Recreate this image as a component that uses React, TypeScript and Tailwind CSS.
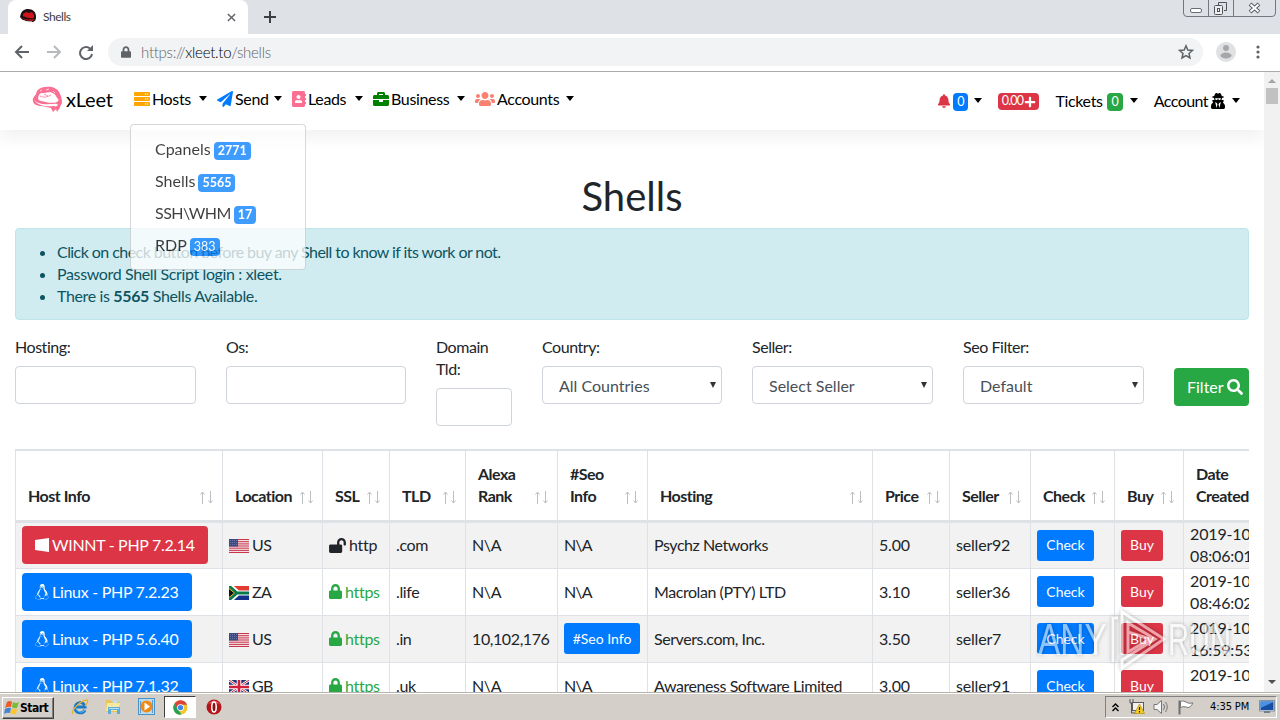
import clsx from 'clsx';
import type { ReactNode } from 'react';
import {
  FaAddressBook,
  FaBell,
  FaBriefcase,
  FaLinux,
  FaLock,
  FaLockOpen,
  FaPaperPlane,
  FaPlus,
  FaSearch,
  FaServer,
  FaUserSecret,
  FaUsers,
} from 'react-icons/fa';

const leftMenu = [
  { label: 'Hosts', icon: <FaServer className="w-4" />, color: 'text-[#ffa500]', width: 'w-[83px]' },
  { label: 'Send', icon: <FaPaperPlane className="w-4" />, color: 'text-[#007bff]', width: 'w-[75px]' },
  { label: 'Leads', icon: <FaAddressBook className="w-3.5" />, color: 'text-[#fb6f92]', width: 'w-[81px]' },
  { label: 'Business', icon: <FaBriefcase className="w-4" />, color: 'text-[#008000]', width: 'w-[102px]' },
  { label: 'Accounts', icon: <FaUsers className="h-4 w-5" />, color: 'text-[#fa8072]', width: 'w-[109px]' },
];

const hostItems = [
  { label: 'Cpanels', count: '2771', spacing: '', weight: 'font-bold' },
  { label: 'Shells', count: '5565', spacing: '', weight: 'font-bold' },
  { label: 'SSH\\WHM', count: '17', spacing: 'tracking-[-0.55px]', weight: 'font-bold' },
  { label: 'RDP', count: '383', spacing: '', weight: 'font-normal' },
];

const columns = [
  { label: 'Host Info', width: 'w-[207px]' },
  { label: 'Location', width: 'w-[100px]' },
  { label: 'SSL', width: 'w-[67px]' },
  { label: 'TLD', width: 'w-[76px]' },
  { label: 'Alexa\nRank', width: 'w-[92px]' },
  { label: '#Seo\nInfo', width: 'w-[90px]' },
  { label: 'Hosting', width: 'w-[225px]' },
  { label: 'Price', width: 'w-[77px]' },
  { label: 'Seller', width: 'w-[81px]' },
  { label: 'Check', width: 'w-[84px]' },
  { label: 'Buy', width: 'w-[69px]' },
  { label: 'Date\nCreated', width: 'w-[110px]' },
];

const rows = [
  { host: 'WINNT - PHP 7.2.14', country: 'US', https: false, tld: '.com', rank: 'N\\A', seo: false, hosting: 'Psychz Networks', price: '5.00', seller: 'seller92', time: '08:06:01' },
  { host: 'Linux - PHP 7.2.23', country: 'ZA', https: true, tld: '.life', rank: 'N\\A', seo: false, hosting: 'Macrolan (PTY) LTD', price: '3.10', seller: 'seller36', time: '08:46:02' },
  { host: 'Linux - PHP 5.6.40', country: 'US', https: true, tld: '.in', rank: '10,102,176', seo: true, hosting: 'Servers.com, Inc.', price: '3.50', seller: 'seller7', time: '16:59:53' },
  { host: 'Linux - PHP 7.1.32', country: 'GB', https: true, tld: '.uk', rank: 'N\\A', seo: false, hosting: 'Awareness Software Limited', price: '3.00', seller: 'seller91', time: '' },
];

function Caret({ className }: { className?: string }) {
  return <span className={clsx('block h-0 w-0 border-x-[4.5px] border-t-[5px] border-x-transparent border-t-black', className)} />;
}

function Badge({ className, children }: { className: string; children: ReactNode }) {
  return (
    <span className={clsx('flex h-[18px] items-center rounded px-1 pt-px text-[12.5px] tracking-normal text-white', className)}>{children}</span>
  );
}

function Logo() {
  return (
    <svg viewBox="0 0 31 27" className="mb-1 h-[27px] w-[31px]">
      <path
        fill="#fb6f92"
        d="M1 15C0 12 3 10 4 8C5 3 9 1 14 1C19 0 25 2 27 6C29 9 30 13 30 17C29 19 28 20 28 22C27 23 26 24 25 26L24 23L21 26L19 22C16 21 13 21 10 20C5 20 1 18 1 15Z"
      />
      <path fill="white" d="M7 9C8 7 10 7 12 7L18 6C22 7 24 9 25 12C27 13 27 15 25 16C20 18 14 16 9 15C5 14 6 11 7 9Z" />
      <path fill="white" d="M2 14C6 18 12 19 18 18C22 18 25 17 26 19C25 20 24 21 22 20C15 21 6 20 2 14Z" />
      <path fill="none" stroke="#fb6f92" strokeWidth=".8" d="M8 10C12 12 15 11 19 9M12 8L16 10" />
      <path fill="none" stroke="white" strokeWidth=".7" d="M8 5L10 4M14 4L17 3M21 5L23 7" />
    </svg>
  );
}

function Favicon() {
  return (
    <svg viewBox="0 0 16 16" className="h-4 w-4">
      <path fill="#1d1013" d="M0 8C1 2 4 0 8 0C13 0 16 3 16 8C16 11 15 12 13 13C8 13 2 12 0 8Z" />
      <path fill="#d0141c" d="M3 5L6 3L9 4L12 3L14 6L14 9C9 10 6 8 3 7Z" />
      <path fill="#d0141c" d="M1 8C5 11 10 11 14 10L13 12C8 12 4 11 1 8Z" />
      <path fill="#f7eeee" d="M3 11C6 12 9 13 12 12L10 15L9 13C6 14 4 13 3 11Z" />
    </svg>
  );
}

function Flag({ country }: { country: string }) {
  if (country === 'US') {
    return (
      <svg viewBox="0 0 20 14" className="mt-0.5 h-3.5 w-5">
        <path fill="#f3dfe3" d="M0 0h20v14H0z" />
        <path stroke="#c8364c" d="M0 .5h20M0 2.700h20M0 4.900h20M0 7h20M0 9.200h20M0 11.400h20M0 13.500h20" />
        <path fill="#3c4a83" d="M0 0h9v7.500H0z" />
        <path stroke="#8790b5" strokeWidth=".6" strokeDasharray="1 1" d="M1 1.500h7M1 3.500h7M1 5.500h7" />
      </svg>
    );
  }
  if (country === 'ZA') {
    return (
      <svg viewBox="0 0 20 14" className="mt-0.5 h-3.5 w-5">
        <path fill="#e03c31" d="M0 0h20v7H0z" />
        <path fill="#16338c" d="M0 7h20v7H0z" />
        <path stroke="white" strokeWidth="5" fill="none" d="M0-1L9 7L0 15M8 7h12" />
        <path fill="#111" d="M0 2L6 7L0 12z" />
        <path stroke="#ffb81c" fill="none" d="M0 2.500L5.500 7L0 11.500" />
        <path stroke="#087a4a" strokeWidth="2.800" fill="none" d="M0 0L8 7L0 14M8 7h12" />
      </svg>
    );
  }
  return (
    <svg viewBox="0 0 20 14" className="mt-0.5 h-3.5 w-5">
      <path fill="#1d3475" d="M0 0h20v14H0z" />
      <path stroke="white" strokeWidth="2.600" d="M0 0L20 14M20 0L0 14" />
      <path stroke="#d0203a" d="M0 0L20 14M20 0L0 14" />
      <path stroke="white" strokeWidth="4.600" d="M10 0v14M0 7h20" />
      <path stroke="#d0203a" strokeWidth="2.600" d="M10 0v14M0 7h20" />
    </svg>
  );
}

function BrowserChrome() {
  return (
    <header className="h-[72px] shrink-0 border-b border-[#a9abad] bg-white">
      <div className="flex h-[34px] items-start bg-[#dee1e6] pl-2">
        <div className="flex h-[34px] w-60 items-center rounded-t-lg bg-white pl-3 pr-3">
          <Favicon />
          <span className="ml-[7px] flex-1 text-xs tracking-[-0.45px] text-[#3c4043]">Shells</span>
          <svg viewBox="0 0 10 10" className="h-[9px] w-[9px]">
            <path d="M1 1L9 9M9 1L1 9" stroke="#5f6368" strokeWidth="1.600" />
          </svg>
        </div>
        <svg viewBox="0 0 12 12" className="ml-4 mt-[11px] h-3 w-3">
          <path d="M6 0V12M0 6H12" stroke="#3c4043" strokeWidth="2" />
        </svg>
        <svg viewBox="0 0 94 18" className="ml-auto mr-[3px] h-[18px] w-[94px]" fill="none">
          <path d="M.5 0V13Q.5 16.500 4 16.500H89Q92.500 16.500 92.500 13V0M25.500 0V16M50.500 0V16" stroke="#73777f" />
          <rect x="7.500" y="8.500" width="11" height="4" rx="1.500" fill="#fff" stroke="#6b6f78" />
          <path d="M35.500 6V2.500H43.500V10.500H41" stroke="#4f535b" />
          <rect x="31.500" y="5.500" width="8" height="9" rx="1" fill="#eee" stroke="#4f535b" />
          <rect x="34.500" y="8.500" width="2" height="3" stroke="#4f535b" />
          <path d="M67 4L76 12M76 4L67 12" stroke="#5a5e67" strokeWidth="4" />
          <path d="M67.500 4.500L75.500 11.500M75.500 4.500L67.500 11.500" stroke="#fff" strokeWidth="2" />
        </svg>
      </div>
      <div className="flex h-9 items-center pl-3.5">
        <svg viewBox="0 0 80 16" className="h-4 w-20" fill="none" strokeWidth="2">
          <path d="M15 8H2M8 2L2 8L8 14" stroke="#5f6368" />
          <path d="M33 8H46M40 2L46 8L40 14" stroke="#b7babd" />
          <path d="M76 4.500A6 6 0 1 0 78 10" stroke="#5f6368" />
          <path d="M79 1V7H73z" fill="#5f6368" />
        </svg>
        <div className="ml-3.5 flex h-7 w-[1095px] items-center rounded-full bg-[#f1f3f4] pl-[13px] pr-[9px]">
          <FaLock className="h-3 w-2.5 text-[#5f6368]" />
          <span className="ml-2.5 flex-1 text-[15px] font-light tracking-[-0.27px] text-[#5f6368]">
            https://<span className="text-black">xleet.to</span>/shells
          </span>
          <svg viewBox="0 0 16 16" className="h-4 w-4" fill="none" stroke="#5f6368" strokeWidth="1.500">
            <path d="M8 1.800L9.800 6L14.500 6.400L11 9.500L12 14L8 11.600L4 14L5 9.500L1.500 6.400L6.200 6Z" />
          </svg>
        </div>
        <svg viewBox="0 0 20 20" className="ml-[13px] h-5 w-5">
          <circle cx="10" cy="10" r="10" fill="#e0e1e3" />
          <circle cx="10" cy="6" r="3" fill="#a5a7aa" />
          <ellipse cx="10" cy="13.500" rx="5.500" ry="3" fill="#a5a7aa" />
        </svg>
        <svg viewBox="0 0 4 14" className="ml-5 h-3.5 w-1" fill="#5f6368">
          <circle cx="2" cy="2" r="1.600" />
          <circle cx="2" cy="7" r="1.600" />
          <circle cx="2" cy="12" r="1.600" />
        </svg>
      </div>
    </header>
  );
}

function Navbar() {
  return (
    <nav className="relative z-10 flex h-[58px] items-center bg-white pl-8 pr-6 text-base tracking-[-0.35px] text-black shadow-[0_8px_16px_rgba(0,0,0,0.06)]">
      <Logo />
      <span className="ml-[3px] w-[68px] pb-[5px] text-[20px] tracking-[-0.2px]">xLeet</span>
      {leftMenu.map((item) => (
        <div key={item.label} className={clsx('flex items-center pb-[5px]', item.width)}>
          <span className={clsx('mr-0.5', item.color)}>{item.icon}</span>
          {item.label}
          <Caret className="ml-auto mr-2.5" />
        </div>
      ))}
      <div className="ml-auto flex items-center pb-px">
        <FaBell className="mt-px h-3.5 w-3.5 text-[#dc3545]" />
        <Badge className="ml-0.5 mr-1.5 mt-0.5 bg-[#007bff]">0</Badge>
        <Caret />
        <span className="ml-4 mt-0.5 flex h-[17px] w-[41px] items-center justify-center rounded bg-[#dc3545] text-[12.5px] tracking-[-0.8px] text-white">
          0.00
          <FaPlus className="ml-px h-3 w-3" />
        </span>
        <span className="ml-4 w-[48px]">Tickets</span>
        <Badge className="ml-1 mr-[7px] mt-0.5 bg-[#28a745]">0</Badge>
        <Caret />
        <span className="ml-4 tracking-[-0.55px]">Account</span>
        <FaUserSecret className="ml-[3px] mr-[7px] h-4 w-[14px]" />
        <Caret />
      </div>

      <div className="absolute top-[52px] left-[130px] flex h-[146px] w-44 flex-col rounded border border-black/20 bg-white pt-2 pl-6 tracking-normal opacity-75">
        {hostItems.map((item) => (
          <div key={item.label} className="flex h-8 items-center">
            <span className={item.spacing}>{item.label}</span>
            <Badge className={clsx('ml-[3px] mt-[3px] bg-[#007bff]', item.weight)}>{item.count}</Badge>
          </div>
        ))}
      </div>
    </nav>
  );
}

function Field({ label, width, value }: { label: string; width: string; value?: string }) {
  return (
    <label className={clsx('shrink-0', width)}>
      <span className="mb-2 block whitespace-pre-line tracking-[-0.45px]">{label}</span>
      <span className="flex h-[38px] items-center justify-between rounded border border-[#ced4da] bg-white pt-px pr-[5px] pl-4 text-[#495057]">
        {value}
        {value && <span className="mb-0.5 h-0 w-0 border-x-[3px] border-t-[6px] border-x-transparent border-t-[#333]" />}
      </span>
    </label>
  );
}

function Filters() {
  return (
    <form className="mt-4 flex items-start gap-[30px] leading-[22px]">
      <Field label="Hosting:" width="w-[181px]" />
      <Field label="Os:" width="w-[180px]" />
      <Field label={'Domain\nTld:'} width="w-[76px]" />
      <Field label="Country:" width="w-[180px]" value="All Countries" />
      <Field label="Seller:" width="w-[181px]" value="Select Seller" />
      <Field label="Seo Filter:" width="w-[181px]" value="Default" />
      <button type="button" className="mt-8 flex h-[38px] w-[75px] items-center gap-[3px] rounded bg-[#28a745] pl-[13px] text-white">
        Filter <FaSearch className="shrink-0" />
      </button>
    </form>
  );
}

function SmallButton({ className, children }: { className: string; children: ReactNode }) {
  return (
    <button type="button" className={clsx('block h-[31px] rounded-[3px] text-sm tracking-normal whitespace-nowrap text-white', className)}>
      {children}
    </button>
  );
}

function ShellTable() {
  return (
    <div className="mt-[23px] w-[1234px] overflow-hidden">
      <table className="w-[1278px] table-fixed border-collapse leading-[22px] text-[#212529]">
        <thead>
          <tr className="h-[71px] border-t-2 border-b-[3px] border-[#dee2e6]">
            {columns.map((col) => (
              <th key={col.label} className={clsx('border-x border-[#dee2e6] pr-[9px] pb-[13px] pl-3 text-left align-bottom font-bold', col.width)}>
                <div className="flex items-end justify-between">
                  <span className="whitespace-pre tracking-[-0.5px]">{col.label}</span>
                  <svg viewBox="0 0 13 13" className="mb-[3px] h-[13px] w-[13px] shrink-0" fill="none" stroke="#bcbec0">
                    <path d="M2.500 13V1M.5 3.500L2.500 1L4.500 3.500M10.500 0V12M8.500 9.500L10.500 12L12.500 9.500" />
                  </svg>
                </div>
              </th>
            ))}
          </tr>
        </thead>
        <tbody>
          {rows.map((row, i) => (
            <tr key={row.host} className={clsx('h-[47px] border-b border-[#dee2e6]', i % 2 === 0 && 'bg-[#f2f2f2]')}>
              <td className="border-x border-[#dee2e6] px-1.5">
                <span
                  className={clsx(
                    'inline-flex h-[38px] items-center gap-[3px] rounded px-[13px] align-middle text-white',
                    row.https ? 'bg-[#007bff] tracking-[-0.29px]' : 'bg-[#dc3545] tracking-[-0.31px]',
                  )}
                >
                  {row.https ? (
                    <FaLinux className="w-3.5" />
                  ) : (
                    <svg viewBox="0 0 14 14" className="h-3.5 w-3.5" fill="currentColor">
                      <path d="M0 2L14 0V14L0 12Z" />
                    </svg>
                  )}
                  {row.host}
                </span>
              </td>
              <td className="border-x border-[#dee2e6] px-1.5">
                <span className="flex items-center gap-[3px] tracking-[-0.6px]">
                  <Flag country={row.country} />
                  {row.country}
                </span>
              </td>
              <td className="border-x border-[#dee2e6] px-1.5">
                <span className={clsx('flex items-center gap-[3px] tracking-[-0.3px]', row.https && 'text-[#28a745]')}>
                  {row.https ? <FaLock className="h-[15px] w-[13px]" /> : <FaLockOpen className="h-[15px] w-[17px]" />}
                  {row.https ? 'https' : 'http'}
                </span>
              </td>
              <td className="border-x border-[#dee2e6] px-1.5 tracking-[-0.4px]">{row.tld}</td>
              <td className="border-x border-[#dee2e6] px-1.5 tracking-[-0.4px]">{row.rank}</td>
              <td className="border-x border-[#dee2e6] px-1.5 tracking-[-0.9px]">
                {row.seo ? <SmallButton className="w-[76px] bg-[#007bff]">#Seo Info</SmallButton> : 'N\\A'}
              </td>
              <td className="border-x border-[#dee2e6] px-1.5 tracking-[-0.44px] whitespace-nowrap">{row.hosting}</td>
              <td className="border-x border-[#dee2e6] px-1.5 tracking-[-0.2px]">{row.price}</td>
              <td className="border-x border-[#dee2e6] px-1.5 tracking-[-0.2px]">{row.seller}</td>
              <td className="border-x border-[#dee2e6] px-1.5">
                <SmallButton className="w-[57px] bg-[#007bff]">Check</SmallButton>
              </td>
              <td className="border-x border-[#dee2e6] px-1.5">
                <SmallButton className="w-[42px] bg-[#dc3545]">Buy</SmallButton>
              </td>
              <td className="border-x border-[#dee2e6] px-1.5 tracking-[-0.15px] whitespace-nowrap">
                2019-10
                <br />
                {row.time || '\u00a0'}
              </td>
            </tr>
          ))}
        </tbody>
      </table>
    </div>
  );
}

function Scrollbar() {
  return (
    <aside className="flex w-4 flex-col items-center bg-[#f1f1f1]">
      <span className="mt-[7px] h-0 w-0 border-x-4 border-b-4 border-x-transparent border-b-[#a3a3a3]" />
      <span className="mt-[5px] h-4 w-3 bg-[#c1c1c1]" />
      <span className="mt-auto mb-2 h-0 w-0 border-x-4 border-t-4 border-x-transparent border-t-[#505050]" />
    </aside>
  );
}

function Watermark() {
  return (
    <div className="pointer-events-none absolute top-[609px] left-[1038px] z-10 flex h-[62px] w-[204px] items-center opacity-55 drop-shadow-[0_0_2px_rgba(0,0,0,0.5)]">
      <span className="w-[70px] text-[44px] leading-none text-white [font-family:'Liberation_Sans',sans-serif]">
        <span className="inline-block origin-left scale-x-[0.76]">ANY</span>
      </span>
      <svg viewBox="0 0 60 62" className="h-[62px] w-[60px] shrink-0" fill="none" stroke="white" strokeWidth="3">
        <path d="M5 53V9H10M14 46V3L56 30L14 59V51L47 30L20 14V43L42 30L20 23" />
      </svg>
      <span className="text-[44px] leading-none text-white [font-family:'Liberation_Sans',sans-serif]">
        <span className="inline-block origin-left scale-x-[0.66]">RUN</span>
      </span>
    </div>
  );
}

function Taskbar() {
  return (
    <footer className="relative z-20 flex h-7 shrink-0 items-center border-t border-[#b5b2ac] bg-[#d4cfc8] pr-[3px] pl-0.5 text-black shadow-[inset_0_1px_0_#fff] [font-family:'DejaVu_Sans_Condensed','DejaVu_Sans',sans-serif]">
      <div className="mt-0.5 flex h-[22px] w-[52px] items-center border border-t-white border-r-[#404040] border-b-[#404040] border-l-white pl-px text-xs font-bold tracking-[-0.5px] shadow-[inset_-1px_-1px_0_#808080]">
        <svg viewBox="0 0 16 16" className="h-4 w-4 shrink-0">
          <path fill="#ee5b27" d="M3 2Q6 0 8 2L7 7Q4 6 1 8z" />
          <path fill="#7cbb39" d="M9 2Q12 4 15 2L13 8Q10 9 8 7z" />
          <path fill="#4486d6" d="M1 9Q4 7 7 8L6 13Q3 12 0 14z" />
          <path fill="#fbc62f" d="M8 8Q10 10 13 9L12 14Q9 15 6 13z" />
        </svg>
        Start
      </div>

      <svg viewBox="0 0 18 18" className="ml-[17px] h-[18px] w-[18px]" fill="none">
        <path d="M14 12C12 16 5 16 4 10C4 4 13 2 14 9H5" stroke="#1c78c8" strokeWidth="3" />
        <path d="M14 12C12 15 6 15 5 10" stroke="#6ec1f2" />
        <path d="M2 16C-1 13 10 2 16 2C18 3 15 7 14 8" stroke="#e7b42e" strokeWidth="1.400" />
      </svg>
      <svg viewBox="0 0 17 17" className="ml-4 h-[17px] w-[17px]">
        <path fill="#e9c25b" d="M1 2H6L7 4H15V14H1Z" />
        <path fill="#f8e9a0" d="M2 5H15L14 13H1Z" />
        <path fill="#5aaedb" d="M3 9H15V16H12V12H6V16H3Z" />
        <path fill="#b8e1f2" d="M4 10H14V11H4ZM8 3H12V5H8Z" />
      </svg>
      <svg viewBox="0 0 17 17" className="ml-4 h-[17px] w-[17px]">
        <path fill="#4a91c8" d="M0 0H17V17H0Z" />
        <path fill="#b9dcee" d="M1 1H16V16H1Z" />
        <path fill="#5e9dcd" d="M2 3H3V15H2ZM14 2H15V15H14Z" />
        <circle cx="8.500" cy="8.500" r="6" fill="#ef8a17" />
        <path fill="white" d="M6.500 4.500L12 8.500L6.500 12.500Z" />
      </svg>
      <div className="mt-px ml-[9px] flex h-[22px] w-8 items-center justify-center border border-t-[#404040] border-r-white border-b-white border-l-[#404040] bg-white">
        <svg viewBox="0 0 16 16" className="h-[15px] w-[15px]">
          <circle cx="8" cy="8" r="7.500" fill="#f5c52e" />
          <path fill="#dc4437" d="M1.500 4A7.500 7.500 0 0 1 15 5H8L5 10Z" />
          <path fill="#28a052" d="M1.500 4L6 11L9 15.500A7.500 7.500 0 0 1 1.500 4Z" />
          <circle cx="8" cy="8" r="3.600" fill="white" />
          <circle cx="8" cy="8" r="2.800" fill="#4385ee" />
        </svg>
      </div>
      <svg viewBox="0 0 16 16" className="ml-2.5 h-4 w-4">
        <circle cx="8" cy="8" r="7.500" fill="#b4151b" />
        <path fill="#e45b57" d="M2 5Q8-2 14 5Q8 3 2 5Z" />
        <ellipse cx="8" cy="8" rx="2.200" ry="5" fill="#8d0d13" stroke="white" strokeWidth="1.500" />
      </svg>

      <div className="mt-px ml-auto flex h-[22px] w-[172px] items-center border border-t-[#808080] border-r-white border-b-white border-l-[#808080] pl-1.5">
        <svg viewBox="0 0 7 9" className="h-[9px] w-[7px]" fill="none" stroke="black" strokeWidth="1.400">
          <path d="M.5 4L3.500 1L6.500 4M.5 8L3.500 5L6.500 8" />
        </svg>
        <svg viewBox="0 0 16 16" className="ml-2.5 h-4 w-4" fill="none">
          <rect x="3.500" y="3.500" width="11" height="8" fill="#f0f0ee" stroke="#5b5b5b" />
          <path d="M1 0V4H4V0M2.500 4V14H8" stroke="#555" />
          <path d="M10.500 5L15.500 14.500H5.500Z" fill="#f6cf22" stroke="#b38d0c" strokeWidth=".7" />
          <path d="M10.500 8V11M10.500 12V13.500" stroke="#222" strokeWidth="1.200" />
        </svg>
        <svg viewBox="0 0 16 16" className="ml-2 h-4 w-4" fill="none" stroke="#77777a">
          <path d="M1 5.500H4L8.500 1.500V14.500L4 10.500H1Z" fill="#f6f6f6" />
          <path d="M10.500 5Q12.500 8 10.500 11M12.500 3Q16 8 12.500 13" />
        </svg>
        <svg viewBox="0 0 16 16" className="ml-[9px] h-4 w-4">
          <path d="M1.500 1.500V15.500" stroke="#707070" strokeWidth="2" />
          <path d="M2.500 2.500Q5 1 8 3Q10 5 15 4Q12 10 8 8Q5 7 2.500 8.500Z" fill="white" stroke="#777" />
        </svg>
        <span className="mt-px ml-4 text-[11px] tracking-[-0.1px] whitespace-nowrap">4:35 PM</span>
        <svg viewBox="0 0 16 14" className="mr-px ml-auto h-3.5 w-4">
          <path fill="#e0e9f2" stroke="#60708a" strokeWidth=".7" d="M.5.5H15.500V11H.5Z" />
          <path fill="#164ea5" d="M1.500 1.500H14.500V10H1.500Z" />
          <path fill="#4a91df" d="M1.500 8L14.500 2V1.500H1.500Z" />
          <path fill="#73808e" d="M5 11H11V13H5Z" />
        </svg>
      </div>
    </footer>
  );
}

export default function App() {
  return (
    <div className="relative flex h-[720px] w-[1280px] flex-col overflow-hidden bg-white text-base text-[#212529] [font-family:Lato,sans-serif]">
      <BrowserChrome />
      <div className="flex min-h-0 flex-1">
        <main className="min-w-0 flex-1 overflow-hidden">
          <Navbar />
          <div className="px-[15px]">
            <h1 className="pt-[42px] text-center text-[40px] leading-[48px]">Shells</h1>
            <ul className="mt-2 h-[92px] w-[1234px] list-disc rounded border border-[#bee5eb] bg-[#d1ecf1] pt-3 pl-[41px] leading-[22px] tracking-[-0.36px] text-[#0c5460]">
              <li className="tracking-[-0.56px]">Click on check button before buy any Shell to know if its work or not.</li>
              <li>Password Shell Script login : xleet.</li>
              <li>
                There is <b>5565</b> Shells Available.
              </li>
            </ul>
            <Filters />
            <ShellTable />
          </div>
        </main>
        <Scrollbar />
      </div>
      <Watermark />
      <Taskbar />
    </div>
  );
}
